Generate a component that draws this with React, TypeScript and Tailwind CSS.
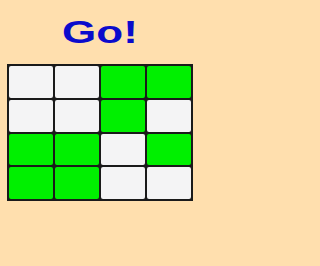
const cells = [
  0, 0, 1, 1,
  0, 0, 1, 0,
  1, 1, 0, 1,
  1, 1, 0, 0,
];

export default function App() {
  return (
    <div className="h-screen min-h-[266px] w-full bg-[#ffdfae] font-['Liberation_Sans',Arial,sans-serif]">
      <div className="flex h-[266px] w-[200px] flex-col items-center">
        <div className="flex h-[64px] items-center justify-center">
          <h1 className="scale-y-[0.72] text-[44px] font-bold leading-none text-[#0b0bcc]">Go!</h1>
        </div>
        <div className="grid w-[186px] grid-cols-4 gap-[2px] bg-[#1a1a1a] p-[2px]">
          {cells.map((on, i) => (
            <div
              key={i}
              className={`h-[31.75px] rounded-[2px] ${on ? "bg-[#00f000]" : "bg-[#f4f4f5]"}`}
            />
          ))}
        </div>
      </div>
    </div>
  );
}
